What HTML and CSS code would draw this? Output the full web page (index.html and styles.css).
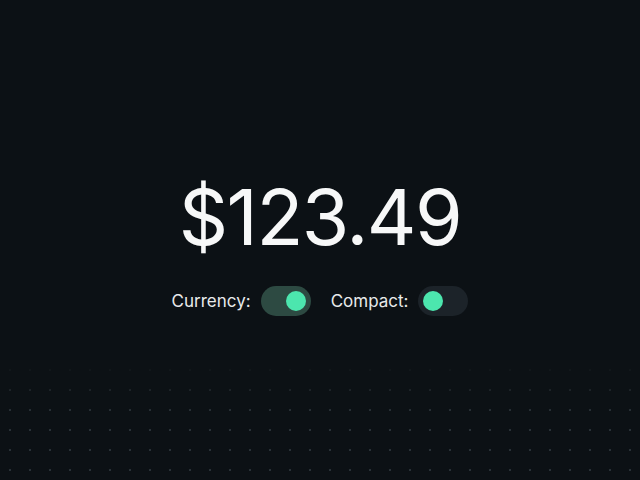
FILE: index.html
```html
<!DOCTYPE html>
<html>
<head>
<meta charset="utf-8">
<link rel="stylesheet" href="styles.css">
</head>
<body>
<div class="page">
  <div class="content">
    <div class="amount">$123.49</div>
    <div class="controls">
      <div class="control">
        <span class="label">Currency:</span>
        <span class="toggle on"><span class="knob"></span></span>
      </div>
      <div class="control">
        <span class="label">Compact:</span>
        <span class="toggle off"><span class="knob"></span></span>
      </div>
    </div>
  </div>
  <div class="dots"></div>
</div>
</body>
</html>
```
FILE: styles.css
```css
html, body {
  margin: 0;
  padding: 0;
  width: 640px;
  height: 480px;
  background: #0c1115;
  overflow: hidden;
}
.page {
  position: relative;
  width: 640px;
  height: 480px;
  display: flex;
  align-items: center;
  justify-content: center;
  font-family: Inter, "Liberation Sans", sans-serif;
}
.content {
  position: relative;
  z-index: 1;
  display: flex;
  flex-direction: column;
  align-items: center;
  gap: 29px;
  margin-top: 13px;
}
.amount {
  color: #f7f8f8;
  font-size: 77px;
  line-height: 80px;
  font-weight: 400;
  letter-spacing: -1.5px;
}
.controls {
  display: flex;
  align-items: center;
  gap: 20px;
}
.control {
  display: flex;
  align-items: center;
  gap: 10px;
}
.label {
  color: #e8eaeb;
  font-size: 17px;
}
.toggle {
  display: flex;
  align-items: center;
  width: 50px;
  height: 30px;
  border-radius: 15px;
  padding: 0 5px;
  box-sizing: border-box;
}
.toggle.on {
  background: #2d4a42;
  justify-content: flex-end;
}
.toggle.off {
  background: #1c2329;
  justify-content: flex-start;
}
.knob {
  width: 20px;
  height: 20px;
  border-radius: 50%;
  background: #4ce6ae;
}
.dots {
  position: absolute;
  left: 0;
  right: 0;
  bottom: 0;
  height: 120px;
  background-image: radial-gradient(circle, rgba(120,135,145,0.28) 0.8px, transparent 1.2px);
  background-size: 20px 20px;
  background-position: 0 0;
  -webkit-mask-image: linear-gradient(to bottom, transparent 0%, black 45%);
  mask-image: linear-gradient(to bottom, transparent 0%, black 45%);
}
```
